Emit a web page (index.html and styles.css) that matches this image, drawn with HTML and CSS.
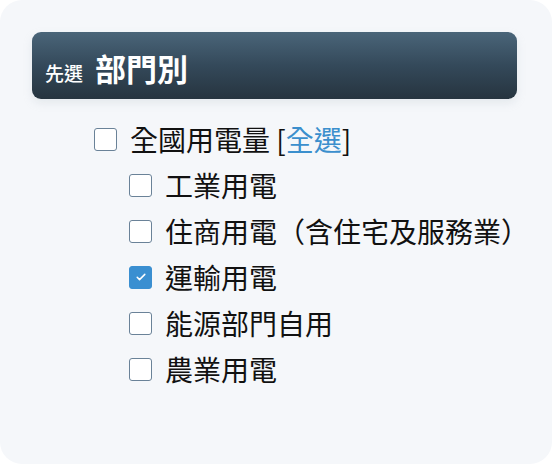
FILE: index.html
```html
<!DOCTYPE html>
<html lang="zh-Hant">
<head>
<meta charset="utf-8">
<link rel="stylesheet" href="styles.css">
</head>
<body>
<div class="card">
  <div class="header">
    <span class="pre">先選</span>
    <span class="title">部門別</span>
  </div>
  <ul class="tree">
    <li class="row lvl1">
      <span class="box"></span>
      <span class="label">全國用電量 [<a class="link">全選</a>]</span>
    </li>
    <li class="row lvl2">
      <span class="box"></span>
      <span class="label">工業用電</span>
    </li>
    <li class="row lvl2">
      <span class="box"></span>
      <span class="label">住商用電（含住宅及服務業）</span>
    </li>
    <li class="row lvl2">
      <span class="box checked">
        <svg viewBox="0 0 24 24" width="14" height="14"><path d="M5.5 12.5l4 4 9-9" fill="none" stroke="#fff" stroke-width="2.6" stroke-linecap="round" stroke-linejoin="round"/></svg>
      </span>
      <span class="label">運輸用電</span>
    </li>
    <li class="row lvl2">
      <span class="box"></span>
      <span class="label">能源部門自用</span>
    </li>
    <li class="row lvl2">
      <span class="box"></span>
      <span class="label">農業用電</span>
    </li>
  </ul>
</div>
</body>
</html>
```

FILE: styles.css
```css
html, body {
  margin: 0;
  padding: 0;
  background: #ffffff;
}
body {
  font-family: "Noto Sans CJK TC", "Noto Sans", sans-serif;
}
.card {
  width: 552px;
  height: 464px;
  background: #f5f7fa;
  border-radius: 22px;
  padding: 32px 0 0 32px;
  box-sizing: border-box;
}
.header {
  width: 485px;
  height: 67px;
  box-sizing: border-box;
  border-radius: 9px;
  background: linear-gradient(to bottom, #4a6579 0%, #34495a 50%, #26343f 100%);
  display: flex;
  align-items: baseline;
  padding: 16px 0 0 13px;
  color: #ffffff;
  box-shadow: 0 4px 8px rgba(180, 190, 200, 0.25);
}
.pre {
  font-size: 19px;
  font-weight: 500;
  margin-right: 12px;
}
.title {
  font-size: 31px;
  font-weight: 700;
  line-height: 40px;
}
.tree {
  list-style: none;
  margin: 17px 0 0 0;
  padding: 0;
}
.row {
  height: 46px;
  display: flex;
  align-items: center;
  font-size: 28px;
  color: #111111;
}
.lvl1 { padding-left: 62px; }
.lvl2 { padding-left: 97px; }
.box {
  width: 21px;
  height: 21px;
  border: 1px solid #6a8298;
  border-radius: 3px;
  background: #ffffff;
  margin-right: 13px;
  flex: none;
  display: flex;
  align-items: center;
  justify-content: center;
}
.box.checked {
  background: #3a8fd1;
  border-color: #3a8fd1;
}
.label {
  line-height: 46px;
  white-space: nowrap;
}
.link {
  color: #3b8fcd;
}
```
